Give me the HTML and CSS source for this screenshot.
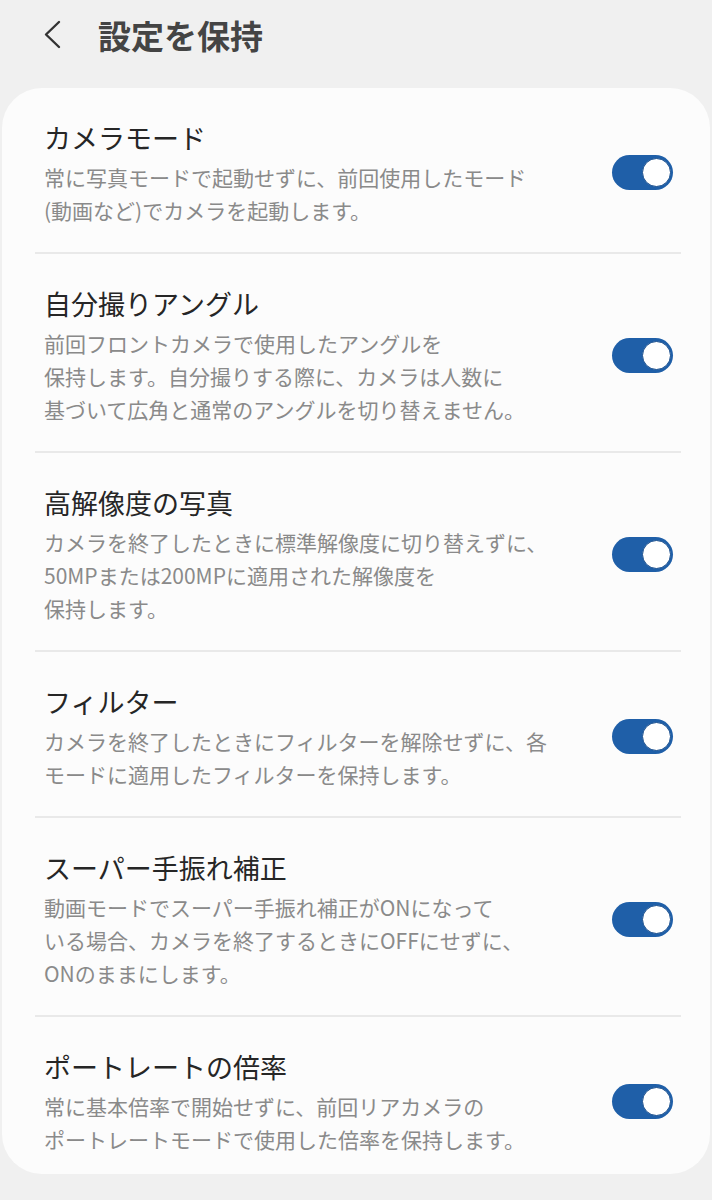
FILE: index.html
```html
<!DOCTYPE html>
<html lang="ja">
<head>
    <meta charset="UTF-8">
    <meta name="viewport" content="width=device-width, initial-scale=1.0">
    <title>設定を保持</title>
    <link rel="stylesheet" href="styles.css">
</head>
<body>
<div class="header">
    <svg class="back" width="20" height="30" viewBox="0 0 20 30">
        <polyline points="16,2 3,14.5 16,27" fill="none" stroke="#333" stroke-width="2.4" stroke-linecap="round" stroke-linejoin="round"/>
    </svg>
    <h1>設定を保持</h1>
</div>

<div class="card">
    <div class="item">
        <div class="text">
            <div class="title">カメラモード</div>
            <div class="desc">常に写真モードで起動せずに、前回使用したモード<br>(動画など)でカメラを起動します。</div>
        </div>
        <div class="toggle"><span class="knob"></span></div>
    </div>
    <div class="item">
        <div class="text">
            <div class="title">自分撮りアングル</div>
            <div class="desc">前回フロントカメラで使用したアングルを<br>保持します。自分撮りする際に、カメラは人数に<br>基づいて広角と通常のアングルを切り替えません。</div>
        </div>
        <div class="toggle"><span class="knob"></span></div>
    </div>
    <div class="item">
        <div class="text">
            <div class="title">高解像度の写真</div>
            <div class="desc">カメラを終了したときに標準解像度に切り替えずに、<br>50MPまたは200MPに適用された解像度を<br>保持します。</div>
        </div>
        <div class="toggle"><span class="knob"></span></div>
    </div>
    <div class="item">
        <div class="text">
            <div class="title">フィルター</div>
            <div class="desc">カメラを終了したときにフィルターを解除せずに、各<br>モードに適用したフィルターを保持します。</div>
        </div>
        <div class="toggle"><span class="knob"></span></div>
    </div>
    <div class="item">
        <div class="text">
            <div class="title">スーパー手振れ補正</div>
            <div class="desc">動画モードでスーパー手振れ補正がONになって<br>いる場合、カメラを終了するときにOFFにせずに、<br>ONのままにします。</div>
        </div>
        <div class="toggle"><span class="knob"></span></div>
    </div>
    <div class="item">
        <div class="text">
            <div class="title">ポートレートの倍率</div>
            <div class="desc">常に基本倍率で開始せずに、前回リアカメラの<br>ポートレートモードで使用した倍率を保持します。</div>
        </div>
        <div class="toggle"><span class="knob"></span></div>
    </div>
</div>
</body>
</html>
```

FILE: styles.css
```css
body {
    margin: 0;
    background-color: #f0f0f0;
    font-family: "Noto Sans CJK JP", "Noto Sans", sans-serif;
    color: #222;
}

.header {
    height: 70px;
    display: flex;
    align-items: center;
}

.header .back {
    margin-left: 43px;
}

.header h1 {
    margin: 0 0 0 35px;
    font-size: 33px;
    font-weight: 700;
    color: #444;
    line-height: 40px;
}

.card {
    margin: 18px 2px 0;
    background-color: #fcfcfc;
    border-radius: 40px;
    padding: 0 29px 0 33px;
}

.item {
    display: flex;
    align-items: center;
    padding: 30px 8px 25px 9px;
    border-bottom: 2px solid #e9e9e9;
}

.item:last-child {
    border-bottom: none;
    padding-bottom: 18px;
}

.text {
    flex: 1;
    white-space: nowrap;
}

.title {
    font-size: 27px;
    line-height: 40px;
    color: #262626;
}

.desc {
    margin-top: 3px;
    font-size: 21px;
    line-height: 33px;
    color: #8a8a8a;
}

.toggle {
    width: 61px;
    height: 35px;
    box-sizing: border-box;
    border-radius: 18px;
    background-color: #1f5fa8;
    display: flex;
    justify-content: flex-end;
    align-items: center;
    padding-right: 2px;
}

.toggle .knob {
    width: 27px;
    height: 27px;
    border-radius: 50%;
    background-color: #fff;
    border: 1.5px solid #1a4f8e;
}
```
